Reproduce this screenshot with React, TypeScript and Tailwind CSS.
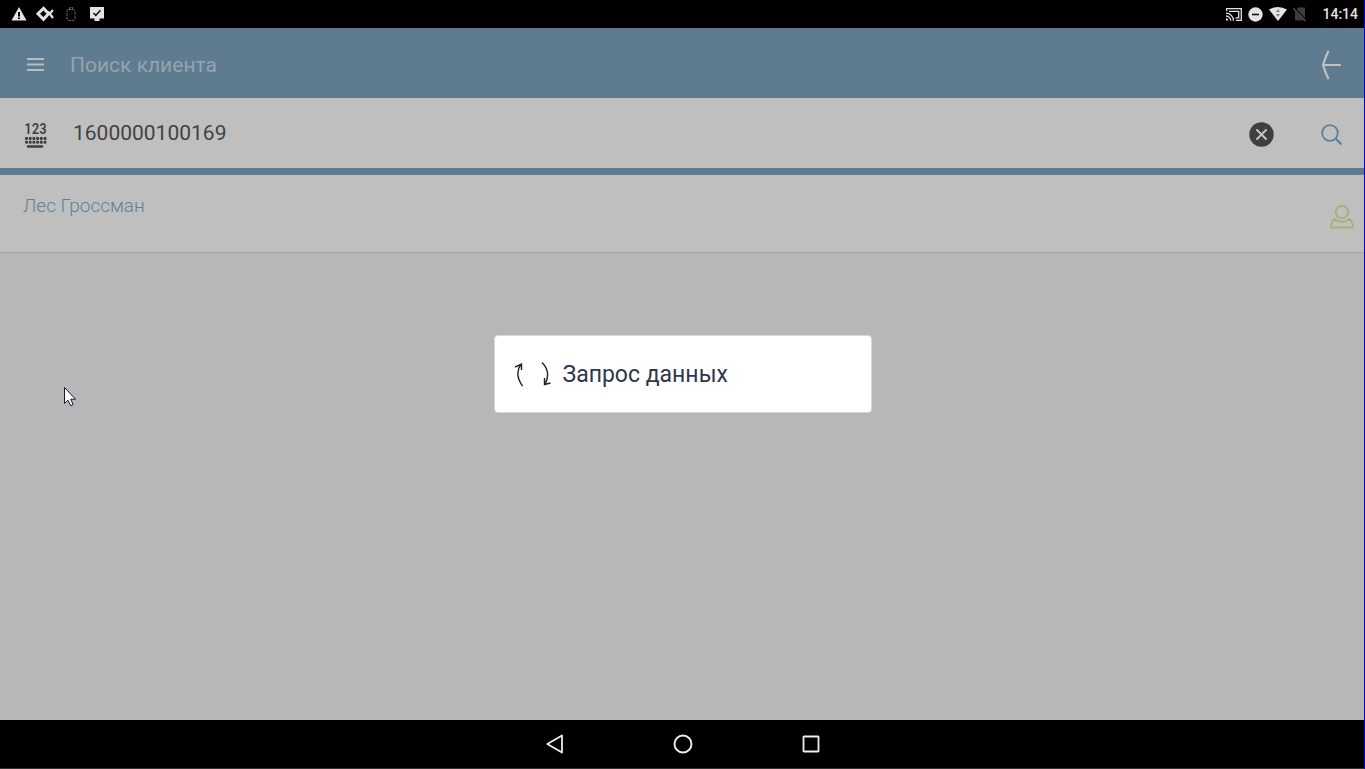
import { useState } from "react";

const StatusBar = () => {
    return ( <div className="flex h-7 items-center justify-between bg-black pl-[11px] pr-[7px] text-[#e4e4e4]">
        <div className="flex items-center">
            <svg className="h-4 w-4" viewBox="0 0 16 16" fill="currentColor">
                <path fillRule="evenodd" d="M8 1 15.500 14.500H.5ZM7 6v4.500h2V6Zm0 5.500v1.500h2v-1.500Z" />
            </svg>
            <svg className="ml-2 h-4 w-[20px]" viewBox="0 0 20 16" fill="none" stroke="currentColor" strokeWidth="3">
                <path d="M8.500 2.300 13.500 7.800 8.500 13.300 3 7.800Z" />
                <path d="m13 5.500 5 6.500M18 4l-4 4.600" strokeWidth="2.200" />
            </svg>
            <svg className="ml-[11px] h-4 w-[10px]" viewBox="0 0 10 16" fill="none" stroke="#6a6a6a">
                <path d="M3.500 3.500v-2h3v2M2.500 3.500h5l1.500 1v9l-1 1H2l-1-1v-9Z" strokeDasharray="3 1" />
            </svg>
            <svg className="ml-[14px] h-4 w-[14px]" viewBox="0 0 14 16" fill="none">
                <path d="M0 1h14v11.500H9.500V15h-5v-2.500H0Z" fill="currentColor" />
                <path d="m3.500 7 2.300 2.300 4.700-5" stroke="#111" strokeWidth="1.500" />
            </svg>
        </div>
        <div className="flex items-center">
            <svg className="h-4 w-4" viewBox="0 0 16 16" fill="none" stroke="currentColor" strokeWidth="1.300">
                <path d="M.7 5V2.700h14.600v11.600H10" />
                <path d="M0 7.200A7.500 7.500 0 0 1 7.500 14.700M0 10a4.700 4.700 0 0 1 4.700 4.700M3 5.300h9.700v6.500H9.500" />
                <path d="M0 12.300a2.200 2.200 0 0 1 2.200 2.200H0Z" fill="currentColor" stroke="none" />
            </svg>
            <svg className="ml-[6px] h-4 w-4" viewBox="0 0 16 16">
                <circle cx="7.500" cy="8.500" r="7.200" fill="currentColor" />
                <path d="M4 8.500h7" stroke="#111" strokeWidth="1.600" />
            </svg>
            <svg className="ml-[5px] h-4 w-[18px]" viewBox="0 0 18 16">
                <path d="M0 3.500Q9-1.500 18 3.500L9 15Z" fill="currentColor" />
                <path d="M9 3 6.800 6h4.400ZM9 11 6.800 8h4.400Z" fill="#888" />
            </svg>
            <svg className="ml-[6px] h-4 w-[14px]" viewBox="0 0 14 16">
                <path d="M5 1.500h7v13H2V5Z" fill="#3c3c3c" />
                <path d="m1 2 11.500 12.500" stroke="#000" strokeWidth="2.500" />
                <path d="m0 2 12.500 13" stroke="#555" strokeWidth="1.200" />
            </svg>
            <span className="ml-[15px] text-[14px] leading-7 font-medium">14:14</span>
        </div>
    </div> );
}

const Header = () => {
    return ( <header className="flex h-[70px] items-center justify-between bg-[#5f7b8f]">
        <div className="flex items-center pt-[3px]">
            <button aria-label="Меню" className="pl-[27px] pr-[26px]">
                <svg className="h-4 w-[17px]" viewBox="0 0 17 16" stroke="#b5bcc2" strokeWidth="2">
                    <path d="M0 2h17M0 7.500h17M0 13h17" />
                </svg>
            </button>
            <h1 className="text-[21px] leading-7 text-[#95a3af]">Поиск клиента</h1>
        </div>
        <button aria-label="Назад" className="pr-6 pt-1">
            <svg className="h-[30px] w-5" viewBox="0 0 20 30" fill="none" stroke="#bfc1c4" strokeWidth="2.200">
                <path d="M7.500 1Q4.500 7 2 15q2.500 8 5.500 14M2 15h18" />
            </svg>
        </button>
    </header> );
}

interface SearchProps {
    value: string;
    onChange: (value: string) => void;
}

const SearchBar = ({ value, onChange }: SearchProps) => {
    return ( <div className="flex h-[77px] items-center border-b-[7px] border-[#5f7b8f] bg-[#bfbfbf]">
        <label htmlFor="client" aria-label="Номер клиента" className="ml-6 flex w-[23px] flex-col items-center pt-[3px] text-[#3f3f3f]">
            <span className="font-['Roboto_Condensed',Roboto,sans-serif] text-[15px] leading-[14px] font-medium">123</span>
            <svg className="h-3 w-[23px]" viewBox="0 0 23 12" fill="none" stroke="currentColor" strokeWidth="3.200" strokeLinecap="round">
                <path d="M2.500 2.400h19M2.500 6.200h19" strokeDasharray="0 3.700" />
                <path d="M4 10.400h14" strokeWidth="2.500" />
            </svg>
        </label>
        <input id="client" type="text" value={value} onChange={(e) => onChange(e.target.value)}
            className="ml-[26px] min-w-0 flex-1 bg-transparent text-[21px] leading-7 text-[#424242] outline-none" />
        <button aria-label="Очистить" onClick={() => onChange("")} className="pt-0.5">
            <svg className="h-[25px] w-[25px]" viewBox="0 0 25 25">
                <circle cx="12.500" cy="12.500" r="12.200" fill="#3f3f3f" />
                <path d="m8 8 9 9m0-9-9 9" stroke="#c4c4c4" strokeWidth="2" strokeLinecap="round" />
            </svg>
        </button>
        <button aria-label="Найти" className="ml-[47px] mr-[22px] pt-[3px]">
            <svg className="h-[22px] w-[22px]" viewBox="0 0 22 22" fill="none" stroke="#5f7f98" strokeWidth="1.800">
                <circle cx="9" cy="9" r="7.800" />
                <path d="m14.500 14.500 6 6" strokeWidth="2.200" />
            </svg>
        </button>
    </div> );
}

const ClientRow = ({ name }: { name: string }) => {
    return ( <li className="flex h-[78px] justify-between border-b border-[#a5a6a7] bg-[#bfbfbf] pl-[23px] pr-[11px]">
        <a href="#client" className="pt-[17px] text-[19px] leading-7 font-light text-[#5f7f98]">{name}</a>
        <svg className="mt-[30px] h-6 w-6" viewBox="0 0 24 24" fill="none" stroke="#a7b176" strokeWidth="1.900">
            <circle cx="12" cy="7" r="6.200" />
            <path d="M4.500 14Q1.500 16.500 1 22.500h22q-.5-6-3.500-8.500-7.500 6-15 0Z" />
        </svg>
    </li> );
}

const LoadingDialog = () => {
    return ( <div className="absolute inset-0 flex items-center justify-center">
        <div role="dialog" aria-label="Запрос данных" className="flex h-[78px] w-[378px] items-center rounded border border-[#d6d7d8] bg-white pl-5">
            <svg className="h-7 w-9" viewBox="0 0 36 28" fill="none" stroke="#222" strokeWidth="1.400">
                <path d="M7.500 26Q-1 14 6 4M0 7l6.500-3V10M27 2.500Q36.500 12 30 24.500M29.500 18v6.500l6-1.500" />
            </svg>
            <span className="ml-3 pt-0.5 text-[23px] leading-8 text-[#30374a]">Запрос данных</span>
        </div>
    </div> );
}

const NavBar = () => {
    return ( <nav className="flex h-[49px] items-center justify-center gap-[108px] border-b border-[#333] bg-black text-[#eee]">
        <button aria-label="Назад">
            <svg className="h-5 w-5" viewBox="0 0 20 20" fill="none" stroke="currentColor" strokeWidth="1.800" strokeLinejoin="round">
                <path d="M17 1.500v17L2.300 10Z" />
            </svg>
        </button>
        <button aria-label="Домой">
            <svg className="h-5 w-5" viewBox="0 0 20 20" fill="none" stroke="currentColor" strokeWidth="1.900">
                <circle cx="10" cy="10" r="8.500" />
            </svg>
        </button>
        <button aria-label="Обзор">
            <svg className="h-5 w-5" viewBox="0 0 20 20" fill="none" stroke="currentColor" strokeWidth="1.800">
                <rect x="2.500" y="2.500" width="15" height="15" rx=".5" />
            </svg>
        </button>
    </nav> );
}

const App = () => {
    const [query, setQuery] = useState("1600000100169");

    return ( <div className="relative flex min-h-screen flex-col bg-[#b6b7b9] font-[Roboto,sans-serif]">
        <StatusBar />
        <div className="relative flex flex-1 flex-col">
            <Header />
            <SearchBar value={query} onChange={setQuery} />
            <ul>
                <ClientRow name="Лес Гроссман" />
            </ul>
            <LoadingDialog />
            {/* mouse pointer */}
            <svg className="absolute left-16 top-[359px] h-5 w-3" viewBox="0 0 12 20" fill="#fff" stroke="#16162a">
                <path d="M.5.5v16L4 13.200l2.700 5.500 2.500-1.200-2.500-5.300h4.800Z" />
            </svg>
        </div>
        <NavBar />
        {/* screen edge */}
        <div className="absolute inset-y-0 right-0 w-px bg-[#0000d8]" />
    </div> );
}

export default App;
